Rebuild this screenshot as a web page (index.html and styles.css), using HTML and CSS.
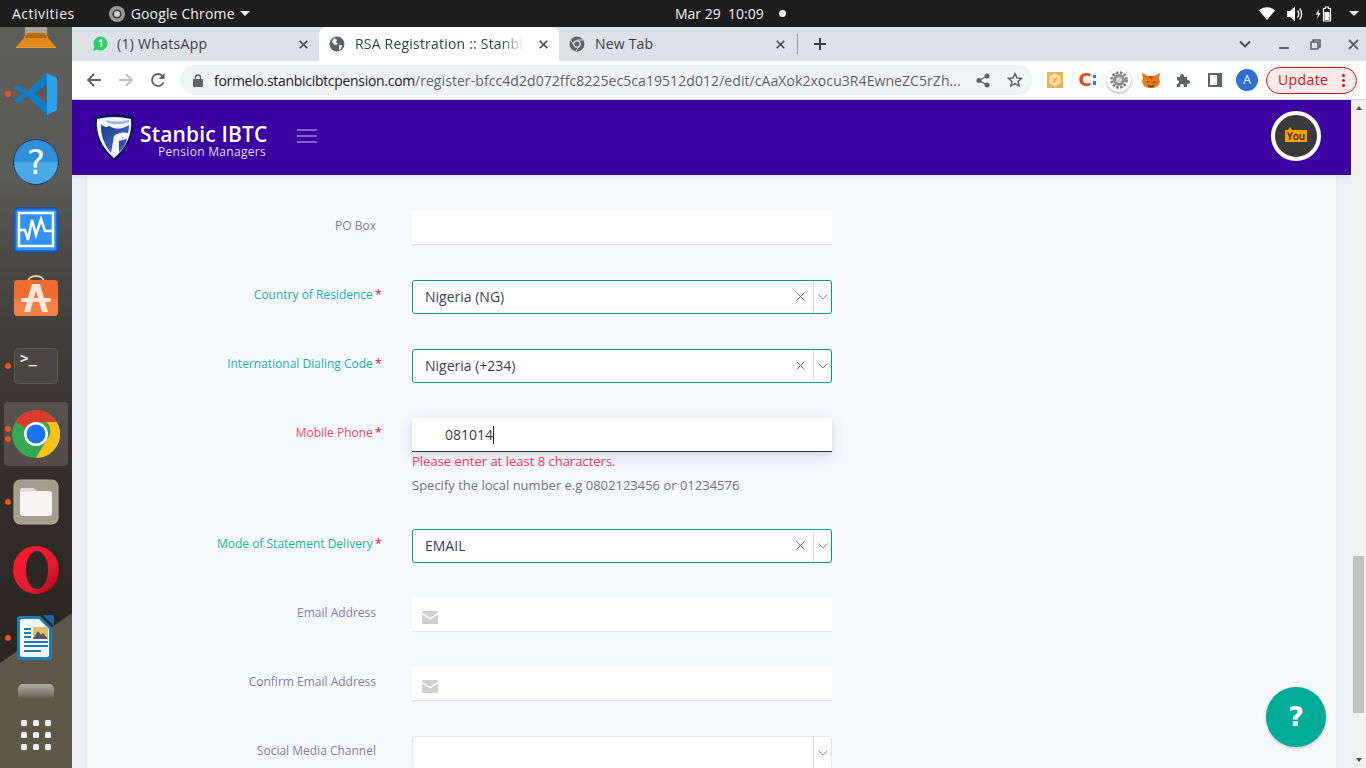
FILE: index.html
```html
<!DOCTYPE html>
<html lang="en">
<head>
<meta charset="utf-8">
<title>RSA Registration :: Stanbic IBTC</title>
<link rel="stylesheet" href="styles.css">
</head>
<body>
<div class="topbar">
  <span class="tb-activities">Activities</span>
  <span class="tb-app">
    <svg width="16" height="16" viewBox="0 0 16 16"><circle cx="8" cy="8" r="8" fill="#9a9a9a"/><circle cx="8" cy="8" r="4.600" fill="#3a3a3a"/><circle cx="8" cy="8" r="3" fill="#d0d0d0"/></svg>
    <span class="tb-appname">Google Chrome</span>
    <i class="caret"></i>
  </span>
  <span class="tb-clock">Mar 29&nbsp; 10:09 <i class="tb-dot"></i></span>
  <span class="tb-status">
    <svg width="16" height="13" viewBox="0 0 16 13"><path d="M0 3.500C4-.8 12-.8 16 3.500L8 13z" fill="#fff"/></svg>
    <svg width="17" height="16" viewBox="0 0 17 16"><path d="M0 5h3l5-4.500v15L3 11H0z" fill="#fff"/><path d="M10.500 4.500c1.500 2 1.500 5 0 7M12.700 2.500c2.500 3 2.500 8 0 11" stroke="#fff" fill="none" stroke-width="1.300"/></svg>
    <svg width="18" height="16" viewBox="0 0 18 16"><path d="M3 3 0 8.500h2L1 13l3.500-6H2.500z" fill="#fff"/><path d="M7.500 2.500h2V1h3v1.500h2V15h-7z" fill="none" stroke="#fff" stroke-width="1.200"/><rect x="8.500" y="6" width="5" height="8" fill="#fff"/></svg>
    <i class="caret"></i>
  </span>
</div>

<div class="desktop">
  <nav class="dock">
    <div class="dock-item">
      <svg width="44" height="44" viewBox="0 0 44 44"><path d="M11 33V25q0-3 4-3h14q4 0 4 3v8z" fill="#a8a49c"/><path d="M12 29h20l3 6 7 8H2l7-8z" fill="#e08a1e"/><path d="M13 29h18l2 5H11z" fill="#b96a14"/><path d="M2 43h40v1H2z" fill="#f0a030"/></svg>
    </div>
    <div class="dock-item has-dot">
      <svg width="46" height="44" viewBox="0 0 46 44"><path d="M34 1 44 6v32l-10 5L14 24 5 31 1 28.500 10 22 1 15.500 5 13l9 7z" fill="#0a7fc9"/><path d="M34 1 44 6v32l-10 5z" fill="#2aa4ee"/><path d="M34 12 21 22l13 10z" fill="#5a5a5a"/></svg>
    </div>
    <div class="dock-item">
      <span class="ico-help">?</span>
    </div>
    <div class="dock-item">
      <svg width="46" height="46" viewBox="0 0 46 46"><rect x="1" y="1" width="44" height="44" rx="4" fill="#1d6fd8" stroke="#0f4fb0"/><rect x="3" y="3" width="40" height="40" rx="2" fill="#2f93f5"/><path d="M6 6h34v33H6z" fill="none" stroke="#fff" stroke-width="2.500"/><path d="M6 23h6l3 10 4-20 4 15 5-16 4 12h8" fill="none" stroke="#fff" stroke-width="2.500"/></svg>
    </div>
    <div class="dock-item">
      <svg width="46" height="46" viewBox="0 0 46 46"><path d="M15 7c0-8 16-8 16 0" fill="none" stroke="#e6cfa0" stroke-width="2"/><rect x="1" y="5" width="44" height="36" rx="4" fill="#ee6c30"/><path d="M1 24h44v13q0 4-4 4H5q-4 0-4-4z" fill="#f47f45"/><path d="M19 9h8l8 28h-6L23 16l-6 21h-6z" fill="#fbe6dc"/><rect x="8" y="23" width="30" height="4" rx="2" fill="#fbe6dc"/></svg>
    </div>
    <div class="dock-item has-dot">
      <span class="ico-term">&gt;_</span>
    </div>
    <div class="dock-item is-active">
      <i class="dot dot-a"></i><i class="dot dot-b"></i>
      <svg width="48" height="48" viewBox="0 0 48 48"><circle cx="24" cy="24" r="24" fill="#34a853"/><path d="M24 0a24 24 0 0 1 20.800 12H24a12 12 0 0 0-10.400 6L3.200 12A24 24 0 0 1 24 0z" fill="#db3a30"/><path d="M44.800 12A24 24 0 0 1 24 48l10.400-18a12 12 0 0 0 0-18z" fill="#fcc21b"/><circle cx="24" cy="24" r="12" fill="#fff"/><circle cx="24" cy="24" r="9.500" fill="#1a73e8"/></svg>
    </div>
    <div class="dock-item has-dot">
      <svg width="46" height="46" viewBox="0 0 46 46"><rect x="1" y="1" width="44" height="44" rx="6" fill="#a39f8f" stroke="#b8b4a6"/><path d="M7 12q0-3 3-3h10l4 3h12q3 0 3 3v19q0 3-3 3H10q-3 0-3-3z" fill="#f6f5f2"/><path d="M7 13q0-4 3-4h10l4 3z" fill="#dcdad3"/></svg>
    </div>
    <div class="dock-item">
      <svg width="46" height="48" viewBox="0 0 46 48"><defs><linearGradient id="op" x1="0" y1="0" x2="1" y2="1"><stop offset="0" stop-color="#ff1b2d"/><stop offset=".65" stop-color="#e01a2f"/><stop offset="1" stop-color="#a70014"/></linearGradient></defs><ellipse cx="23" cy="24" rx="23" ry="24" fill="url(#op)"/><ellipse cx="24" cy="24" rx="11" ry="19" fill="#2d2723"/></svg>
    </div>
    <div class="dock-item has-dot">
      <svg width="38" height="46" viewBox="0 0 38 46"><path d="M26 0h9q2 0 2 2v9z" fill="#1568a8"/><path d="M3 1h20l12 12v29q0 3-3 3H3q-3 0-3-3V4q0-3 3-3z" fill="#1f7db5"/><path d="M5 4h17l10 10v26q0 2-2 2H5q-2 0-2-2V6q0-2 2-2z" fill="#f5f7f9"/><path d="M7 13h7v2H7zM7 17h7v2H7zM7 21h7v2H7zM7 26h24v2H7zM7 30h24v2H7zM7 35h17v2H7z" fill="#2278b5"/><rect x="16" y="12" width="15" height="12" fill="#d9c36a"/><path d="M16 24l5-8 3 4 2-2 5 6z" fill="#556"/></svg>
    </div>
    <div class="dock-item dock-clipped"><i class="ico-clip"></i></div>
    <div class="dock-grid">
      <i></i><i></i><i></i><i></i><i></i><i></i><i></i><i></i><i></i>
    </div>
  </nav>

  <div class="browser">
    <div class="tabbar">
      <div class="tab">
        <svg class="fav" width="16" height="16" viewBox="0 0 16 16"><circle cx="8.500" cy="7.500" r="7" fill="#25d366"/><path d="M3 10 1 15l5-2z" fill="#25d366"/></svg>
        <span class="wa-badge">1</span>
        <span class="tab-title">(1) WhatsApp</span>
        <svg class="tab-x" width="9" height="9" viewBox="0 0 9 9"><path d="M.7.700l7.600 7.600M8.300.700.7 8.300" stroke="#45484d" stroke-width="1.600"/></svg>
      </div>
      <div class="tab tab-active">
        <svg class="fav" width="16" height="16" viewBox="0 0 16 16"><circle cx="8" cy="8" r="7.500" fill="#5f6368"/><path d="M5 2l3 2-1 2 2 2-3 1-3-3zM10 9l3 0-1 4-2 1z" fill="#fff"/></svg>
        <span class="tab-title tab-fade">RSA Registration :: Stanbic IBTC</span>
        <svg class="tab-x" width="9" height="9" viewBox="0 0 9 9"><path d="M.7.700l7.600 7.600M8.300.700.7 8.300" stroke="#45484d" stroke-width="1.600"/></svg>
      </div>
      <div class="tab tab-last">
        <svg class="fav" width="16" height="16" viewBox="0 0 16 16"><circle cx="8" cy="8" r="7.500" fill="#5f6368"/><circle cx="8" cy="8" r="3.800" fill="#dee1e6"/><circle cx="8" cy="8" r="2.500" fill="#5f6368"/><path d="M8 4h6.500M5 9.500 1.800 4M10.500 9.500 7 15" stroke="#dee1e6" fill="none"/></svg>
        <span class="tab-title">New Tab</span>
        <svg class="tab-x" width="9" height="9" viewBox="0 0 9 9"><path d="M.7.700l7.600 7.600M8.300.700.7 8.300" stroke="#45484d" stroke-width="1.600"/></svg>
      </div>
      <i class="tab-sep"></i>
      <span class="tab-plus">
        <svg width="14" height="14" viewBox="0 0 14 14"><path d="M7 1v12M1 7h12" stroke="#3c4043" stroke-width="2"/></svg>
      </span>
      <span class="win-controls">
        <svg class="win-chev" width="12" height="8" viewBox="0 0 12 8"><path d="M1 1.500 6 6.500 11 1.500" stroke="#45484d" stroke-width="1.800" fill="none"/></svg>
        <svg class="win-min" width="10" height="10" viewBox="0 0 10 10"><path d="M0 9h10" stroke="#5f6368" stroke-width="2"/></svg>
        <svg class="win-max" width="11" height="11" viewBox="0 0 11 11"><path d="M3 3V1h7v7H8M1 3h7v7H1z" fill="none" stroke="#5f6368" stroke-width="1.600"/></svg>
        <svg class="win-close" width="11" height="11" viewBox="0 0 11 11"><path d="M1 1l9 9M10 1l-9 9" stroke="#5f6368" stroke-width="1.800"/></svg>
      </span>
    </div>

    <div class="toolbar">
      <svg class="nav-ico" width="16" height="16" viewBox="0 0 16 16"><path d="M15 8H2M8 2 2 8l6 6" fill="none" stroke="#5f6368" stroke-width="1.800"/></svg>
      <svg class="nav-ico" width="16" height="16" viewBox="0 0 16 16"><path d="M1 8h13M8 2l6 6-6 6" fill="none" stroke="#bdc1c6" stroke-width="1.800"/></svg>
      <svg class="nav-ico" width="16" height="16" viewBox="0 0 16 16"><path d="M13.500 10.500A6 6 0 1 1 12.500 4" fill="none" stroke="#5f6368" stroke-width="1.800"/><path d="M14.500 1v6h-6z" fill="#5f6368"/></svg>
      <div class="omnibox">
        <svg width="10" height="13" viewBox="0 0 10 13"><path d="M2.500 5V3.500a2.500 2.500 0 0 1 5 0V5" fill="none" stroke="#5f6368" stroke-width="1.300"/><rect y="5" width="10" height="8" rx="1" fill="#5f6368"/></svg>
        <span class="url"><b>formelo.stanbicibtcpension.com</b>/register-bfcc4d2d072ffc8225ec5ca19512d012/edit/cAaXok2xocu3R4EwneZC5rZh...</span>
        <svg class="omni-share" width="14" height="15" viewBox="0 0 14 15"><circle cx="11" cy="3" r="2.500" fill="#5f6368"/><circle cx="3" cy="7.500" r="2.500" fill="#5f6368"/><circle cx="11" cy="12" r="2.500" fill="#5f6368"/><path d="M11 3 3 7.500l8 4.500" stroke="#5f6368" fill="none" stroke-width="1.300"/></svg>
        <svg class="omni-star" width="16" height="16" viewBox="0 0 16 16"><path d="m8 1.800 1.900 4.100 4.500.5-3.300 3 .9 4.500L8 11.600l-4 2.300.9-4.500-3.300-3 4.500-.5z" fill="none" stroke="#5f6368" stroke-width="1.500"/></svg>
      </div>
      <div class="ext-row">
        <span class="ext">
          <svg width="16" height="16" viewBox="0 0 16 16"><rect width="16" height="16" fill="#f7b04a"/><path d="M8 1.500 13.500 4.700v6.600L8 14.500 2.500 11.300V4.700z" fill="#fde3b4"/><path d="M6 11 10 5M6 7l4 1M6 9l3 1" stroke="#f0a030" stroke-width="1.200"/></svg>
        </span>
        <span class="ext ext-c">C<i class="ext-c-dots"></i></span>
        <span class="ext ext-gear">
          <svg width="18" height="18" viewBox="0 0 18 18"><circle cx="9" cy="9" r="7.500" fill="none" stroke="#777" stroke-width="2.500" stroke-dasharray="2.500 1.500"/><circle cx="9" cy="9" r="6" fill="#8f8f8f"/><circle cx="9" cy="9" r="3" fill="#d5d5d5"/></svg>
        </span>
        <span class="ext">
          <svg width="18" height="16" viewBox="0 0 18 16"><path d="M0 1l6 3h6l6-3-1 5 1 4-2 4-4 2H6l-4-2-2-4 1-4z" fill="#e2761b"/><path d="M2 6l4 3-1 3zM16 6l-4 3 1 3z" fill="#f6851b"/><path d="M6 13l3 1 3-1-1 2H7z" fill="#3a3a3a"/><path d="M5 9l2 1-2 1zM13 9l-2 1 2 1z" fill="#233447"/><path d="M6 4h6L9 8z" fill="#c0581a"/></svg>
        </span>
        <span class="ext">
          <svg width="15" height="15" viewBox="0 0 15 15"><path d="M1 4h3V3a2 2 0 0 1 4 0v1h3v3h1a2 2 0 0 1 0 4h-1v3H8v-1a2 2 0 0 0-4 0v1H1v-3h0a2 2 0 0 0 0-4z" fill="#5f6368"/></svg>
        </span>
        <span class="ext">
          <svg width="14" height="14" viewBox="0 0 14 14"><rect x="1" y="1" width="12" height="12" fill="#fff" stroke="#5f6368" stroke-width="2"/><rect x="9" y="1" width="4" height="12" fill="#5f6368"/></svg>
        </span>
        <span class="ext"><span class="avatar">A</span></span>
      </div>
      <div class="update"><span class="update-label">Update</span><span class="update-dots"><i></i><i></i><i></i></span></div>
    </div>

    <div class="viewport">
      <div class="page">
        <header class="site-header">
          <svg class="brand-shield" width="40" height="47" viewBox="0 0 40 47">
            <defs><linearGradient id="sh" x1="0" y1="0" x2="1" y2="1"><stop offset="0" stop-color="#1f3a8c"/><stop offset="1" stop-color="#4f72c8"/></linearGradient></defs>
            <path d="M1 3Q20-2 39 3Q42 29 20 47Q-2 29 1 3z" fill="#0c1556"/>
            <path d="M3 5Q20 1 37 5Q39 28 20 44Q1 28 3 5z" fill="#f4f5fa"/>
            <path d="M7 10Q6 26 17 39L20 22Q26 17 34 19Q35 15 35 11Q24 18 15 12Q11 15 7 10z" fill="url(#sh)"/>
            <path d="M12 6Q22 9 35 6V8Q24 12 14 9z" fill="#9fb0dd"/>
            <path d="M25 27 33 25Q32 32 25 38z" fill="url(#sh)"/>
          </svg>
          <div class="brand-text">
            <span class="brand-name">Stanbic IBTC</span>
            <span class="brand-sub">Pension Managers</span>
          </div>
          <div class="hamburger"><i></i><i></i><i></i></div>
          <div class="you-avatar"><span class="you-badge">You</span></div>
        </header>

        <main class="content">
          <form class="card">
            <div class="row">
              <label class="lbl">PO Box</label>
              <div class="input"></div>
            </div>

            <div class="row">
              <label class="lbl lbl-ok">Country of Residence<span class="req">*</span></label>
              <div class="select select-ok">
                <span class="select-val">Nigeria (NG)</span>
                <svg class="select-x" width="9" height="9" viewBox="0 0 9 9"><path d="M.5.500l8 8M8.500.500l-8 8" stroke="#777" stroke-width="1"/></svg>
                <span class="select-arrow"><svg width="10" height="6" viewBox="0 0 10 6"><path d="M.5.500 5 5 9.500.500" fill="none" stroke="#888" stroke-width="1"/></svg></span>
              </div>
            </div>

            <div class="row">
              <label class="lbl lbl-ok">International Dialing Code<span class="req">*</span></label>
              <div class="select select-ok">
                <span class="select-val">Nigeria (+234)</span>
                <svg class="select-x" width="9" height="9" viewBox="0 0 9 9"><path d="M.5.500l8 8M8.500.500l-8 8" stroke="#777" stroke-width="1"/></svg>
                <span class="select-arrow"><svg width="10" height="6" viewBox="0 0 10 6"><path d="M.5.500 5 5 9.500.500" fill="none" stroke="#888" stroke-width="1"/></svg></span>
              </div>
            </div>

            <div class="row">
              <label class="lbl lbl-err">Mobile Phone<span class="req">*</span></label>
              <div class="field-stack">
                <div class="input input-focus"><span class="input-val">081014</span><i class="text-caret"></i></div>
                <p class="err-msg">Please enter at least 8 characters.</p>
                <p class="hint">Specify the local number e.g 0802123456 or 01234576</p>
              </div>
            </div>

            <div class="row">
              <label class="lbl lbl-ok">Mode of Statement Delivery<span class="req">*</span></label>
              <div class="select select-ok">
                <span class="select-val">EMAIL</span>
                <svg class="select-x" width="9" height="9" viewBox="0 0 9 9"><path d="M.5.500l8 8M8.500.500l-8 8" stroke="#777" stroke-width="1"/></svg>
                <span class="select-arrow"><svg width="10" height="6" viewBox="0 0 10 6"><path d="M.5.500 5 5 9.500.500" fill="none" stroke="#888" stroke-width="1"/></svg></span>
              </div>
            </div>

            <div class="row">
              <label class="lbl">Email Address</label>
              <div class="input input-mail">
                <svg width="16" height="13" viewBox="0 0 16 13"><path d="M1 0h14q1 0 1 1v.8L8 6.800 0 1.800V1q0-1 1-1zM0 3.500l8 5 8-5V12q0 1-1 1H1q-1 0-1-1z" fill="#cfcfcf"/></svg>
              </div>
            </div>

            <div class="row">
              <label class="lbl">Confirm Email Address</label>
              <div class="input input-mail">
                <svg width="16" height="13" viewBox="0 0 16 13"><path d="M1 0h14q1 0 1 1v.8L8 6.800 0 1.800V1q0-1 1-1zM0 3.500l8 5 8-5V12q0 1-1 1H1q-1 0-1-1z" fill="#cfcfcf"/></svg>
              </div>
            </div>

            <div class="row">
              <label class="lbl">Social Media Channel</label>
              <div class="select">
                <span class="select-val"></span>
                <span class="select-arrow"><svg width="10" height="6" viewBox="0 0 10 6"><path d="M.5.500 5 5 9.500.500" fill="none" stroke="#888" stroke-width="1"/></svg></span>
              </div>
            </div>
          </form>
        </main>

        <button class="help-fab" type="button">?</button>
      </div>

      <div class="scrollbar">
        <i class="sb-up"></i>
        <div class="sb-track"><div class="sb-thumb"></div></div>
        <i class="sb-down"></i>
      </div>
    </div>
  </div>
</div>
</body>
</html>
```

FILE: styles.css
```css
* { box-sizing: border-box; }
html, body { margin: 0; padding: 0; height: 100%; overflow: hidden; }
body {
  width: 1366px; height: 768px;
  display: flex; flex-direction: column;
  font-family: "Open Sans", "Noto Sans", sans-serif;
  background: #000;
}
i { display: block; font-style: normal; }
p { margin: 0; }

/* GNOME top bar */
.topbar {
  height: 27px; flex: none;
  background: #1d1d1d; color: #eef0f2;
  font-size: 14px; line-height: 27px;
  position: relative;
  display: flex; align-items: center;
}
.tb-activities { margin-left: 12px; letter-spacing: .5px; }
.tb-app { margin-left: 34px; display: flex; align-items: center; }
.tb-appname { margin-left: 6px; letter-spacing: .15px; }
.caret { width: 0; height: 0; border: 5px solid transparent; border-top: 5px solid #f2f2f2; border-bottom: 0; margin-left: 5px; }
.tb-clock { position: absolute; left: 675px; top: 0; display: flex; align-items: center; white-space: pre; }
.tb-dot { width: 7px; height: 7px; border-radius: 50%; background: #f5f5f5; margin-left: 12px; }
.tb-status { position: absolute; left: 1259px; top: 0; height: 27px; display: flex; align-items: center; gap: 12px; }
.tb-status .caret { margin-left: 3px; }

.desktop { flex: 1; display: flex; min-height: 0; }

/* Dock */
.dock {
  width: 72px; flex: none; position: relative; overflow: hidden;
  background: linear-gradient(to bottom, #5e5e5c 0, #5a5a58 150px, #4a4845 240px, #3e3a36 330px, #352f2a 450px, #2c2622 600px, #2c2622 100%);
  display: flex; flex-direction: column; align-items: center;
}
.dock::after {
  content: ""; position: absolute; inset: 0;
  background: #5e5849;
  clip-path: polygon(0 636px, 100% 586px, 100% 100%, 0 100%);
}
.dock-item {
  width: 64px; height: 68px; flex: none; position: relative; z-index: 1;
  display: flex; align-items: center; justify-content: center;
}
.dock-item:first-child { margin-top: -35px; }
.has-dot::before, .dot {
  content: ""; position: absolute; left: 1px;
  width: 6px; height: 6px; border-radius: 50%; background: #e95420;
}
.has-dot::before { top: 31px; }
.is-active { height: 64px; margin: 2px 0; background: rgba(255,255,255,.14); border-radius: 4px; }
.dot-a { top: 24px; }
.dot-b { top: 34px; }
.ico-help {
  width: 46px; height: 46px; border-radius: 50%;
  background: linear-gradient(#2f8fd8 0 50%, #4aa8e6 50%);
  border: 1px solid #1d3f5e;
  color: #fff; font: 400 34px/44px "DejaVu Sans", sans-serif; text-align: center;
}
.ico-term {
  width: 44px; height: 36px; padding: 2px 0 0 5px;
  background: #494644; border: 1px solid #605c58; border-radius: 4px;
  color: #f0f0f0; font: 700 14px/15px "DejaVu Sans Mono", monospace;
}
.dock-clipped { align-items: flex-start; padding-top: 12px; }
.ico-clip {
  width: 36px; height: 14px; border-radius: 5px 5px 0 0;
  background: linear-gradient(#b0aca4, #6a6558);
}
.dock-grid {
  position: absolute; left: 21px; bottom: 18px; z-index: 1;
  display: grid; grid-template-columns: repeat(3, 6px); gap: 6px;
}
.dock-grid i { width: 6px; height: 6px; border-radius: 1.500px; background: #eeeeee; }

/* Chrome */
.browser { flex: 1; min-width: 0; display: flex; flex-direction: column; }
.tabbar {
  height: 34px; flex: none; background: #dee1e6;
  display: flex; align-items: stretch; position: relative;
  font-size: 14px; color: #3c4043;
}
.tab {
  width: 247px; padding: 0 11px 0 20px;
  display: flex; align-items: center; position: relative;
  border-radius: 8px 8px 0 0;
}
.tab + .tab { width: 240px; padding-left: 10px; }
.tab-last { padding-right: 12px; width: 238px !important; }
.tab-active { background: #fff; }
.fav { flex: none; }
.wa-badge {
  position: absolute; left: 24px; top: 9px; width: 9px;
  font-size: 10px; line-height: 14px; font-weight: 700; color: #fff; text-align: center;
}
.tab-title { margin-left: 9px; flex: 1; white-space: nowrap; overflow: hidden; letter-spacing: .3px; padding-bottom: 2px; }
.tab + .tab .tab-title { margin-left: 10px; letter-spacing: .2px; }
.tab-fade { -webkit-mask-image: linear-gradient(to right, #000 82%, transparent 96%); mask-image: linear-gradient(to right, #000 82%, transparent 96%); }
.tab-x { flex: none; margin-left: 7px; }
.tab-sep { width: 1px; height: 20px; margin: 7px 0 0 0; background: #8f9499; }
.tab-plus { margin-left: 15px; display: flex; align-items: center; }
.win-controls { position: absolute; inset: 0 0 0 auto; width: 127px; display: flex; align-items: center; }
.win-min { margin-left: 28px; }
.win-max { margin-left: 21px; }
.win-close { margin-left: 27px; }

.toolbar {
  height: 39px; flex: none; background: #fff;
  border-bottom: 1px solid #d6d4e6;
  display: flex; align-items: center; padding-left: 14px;
}
.nav-ico { margin-right: 16px; flex: none; }
.omnibox {
  width: 853px; height: 30px; margin-left: -2px; border-radius: 15px;
  background: #f1f3f4; padding-left: 13px; flex: none;
  display: flex; align-items: center; position: relative;
}
.url {
  margin-left: 11px; width: 750px; white-space: nowrap; overflow: hidden;
  font-size: 14px; color: #5f6368; letter-spacing: .07px;
}
.url b { font-weight: 400; color: #202124; letter-spacing: -.3px; }
.omni-share { margin-left: 12px; }
.omni-star { margin-left: 17px; }
.ext-row { display: flex; margin-left: 6px; }
.ext { width: 32px; height: 32px; display: flex; align-items: center; justify-content: center; }
.ext-c { color: #f1450f; font: 700 18px/32px "DejaVu Sans", sans-serif; position: relative; }
.ext-c-dots { width: 3px; height: 10px; margin-left: 1px; background: linear-gradient(#4a6ee0 0 35%, transparent 35% 65%, #4a6ee0 65%); }
.ext-gear { border-radius: 50%; background: #fff; box-shadow: 0 1px 3px rgba(0,0,0,.35); width: 24px; height: 24px; margin: 4px; }
.avatar {
  width: 22px; height: 22px; border-radius: 50%; background: #2f6fd0; color: #fff;
  font-size: 12px; line-height: 22px; text-align: center;
}
.update {
  width: 91px; height: 27px; margin-left: 3px; flex: none;
  border: 1px solid #d50f0f; border-radius: 14px; background: #fbeaea; color: #c5161a;
  font-size: 14px; line-height: 25px; padding-left: 11px; letter-spacing: .4px;
  display: flex; justify-content: space-between; align-items: center;
}
.update-label { line-height: 21px; padding-bottom: 2px; }
.update-dots { display: flex; flex-direction: column; gap: 2px; margin-right: 11px; }
.update-dots i { width: 3px; height: 3px; border-radius: 50%; background: #d50f0f; }

/* Page */
.viewport { flex: 1; min-height: 0; display: flex; }
.page { flex: 1; min-width: 0; position: relative; display: flex; flex-direction: column; overflow: hidden; background: #eef0f8; }
.site-header {
  height: 75px; flex: none; background: #3b00a0;
  display: flex; align-items: center; padding: 0 30px 3px 22px;
  box-shadow: 0 2px 6px rgba(0,0,0,.08); position: relative; z-index: 2;
}
.brand-shield { flex: none; margin-top: 2px; }
.brand-text { display: flex; flex-direction: column; margin-left: 6px; width: 127px; padding-top: 9px; text-align: right; color: #fff; }
.brand-name { font-size: 21px; line-height: 22px; font-weight: 600; white-space: nowrap; letter-spacing: .15px; }
.brand-sub { font-size: 12px; line-height: 14px; color: #e3dcf7; white-space: nowrap; letter-spacing: .3px; padding-right: 1px; }
.hamburger { margin-left: 30px; width: 20px; display: flex; flex-direction: column; gap: 4px; }
.hamburger i { height: 2px; background: #7d62d2; }
.you-avatar {
  width: 50px; height: 50px; margin-left: auto; flex: none; border-radius: 50%;
  background: #3a3a3a; border: 4px solid #fff;
  display: flex; align-items: center; justify-content: center;
}
.you-badge { position: relative; background: #f5a200; color: #2e2400; font-size: 10px; line-height: 12px; width: 22px; text-align: center; font-weight: 600; }
.you-badge::before { content: ""; position: absolute; left: 3px; top: -3px; border: 2px solid transparent; border-top: 0; border-bottom: 3px solid #f5a200; }

.content { flex: 1; min-height: 0; padding: 0 15px; overflow: hidden; }
.card { background: #f7f8fc; padding-top: 36px; height: 700px; box-shadow: 0 0 4px rgba(60,60,120,.08); }
.row { display: grid; grid-template-columns: 325px 420px; margin-bottom: 35px; }
.lbl { font-size: 12px; line-height: 16px; padding: 7px 36px 0 0; text-align: right; color: #8380a4; }
.lbl-ok { color: #1bb5a6; }
.lbl-err { color: #f5476a; }
.req { color: #f2083a; margin-left: 2px; margin-right: -6px; font-size: 13px; line-height: 12px; }
.input {
  height: 34px; background: #fff; border-bottom: 1px solid #e4e4e6;
  display: flex; align-items: center; font-size: 14px; color: #32325d;
}
.input-focus { border-bottom-color: #32325d; box-shadow: 0 4px 14px rgba(50,50,93,.14), 0 1px 3px rgba(0,0,0,.08); padding-left: 33px; }
.input-val { color: #3a3a4a; }
.text-caret { width: 1px; height: 18px; background: #222; }
.input-mail { padding: 5px 0 0 10px; }
.field-stack { height: 76px; }
.err-msg { font-size: 13px; line-height: 18px; color: #f5365c; }
.hint { font-size: 13px; line-height: 18px; color: #747474; margin-top: 6px; }
.select {
  height: 34px; background: #fff; border: 1px solid #e6e6e8; border-radius: 3px;
  display: flex; align-items: center;
  font-size: 14px; color: #3f3f4f;
}
.select-ok { border-color: #0a9a7c; }
.select-val { flex: 1; padding-left: 12px; line-height: 32px; }
.select-x { flex: none; margin: 0 8px 1px 0; }
.select-arrow { width: 18px; height: 32px; border-left: 1px solid #e2e2e2; display: flex; align-items: center; justify-content: center; }

.help-fab {
  position: absolute; left: 1194px; top: 587px;
  width: 60px; height: 60px; border: 0; border-radius: 50%; padding: 0;
  background: #00ab97; color: #fff; box-shadow: 0 1px 3px rgba(0,0,0,.25);
  font: 700 27px/60px "DejaVu Sans", sans-serif; text-align: center;
}

.scrollbar { width: 15px; flex: none; background: #f1f1f1; display: flex; flex-direction: column; align-items: center; }
.sb-up, .sb-down { width: 0; height: 0; border: 3.500px solid transparent; flex: none; }
.sb-up { border-bottom: 4px solid #505050; border-top: 0; margin-top: 6px; }
.sb-down { border-top: 4px solid #505050; border-bottom: 0; margin: 0 0 6px; }
.sb-track { flex: 1; width: 100%; padding: 446px 2px 0; }
.sb-thumb { height: 157px; background: #c1c1c1; }
```
